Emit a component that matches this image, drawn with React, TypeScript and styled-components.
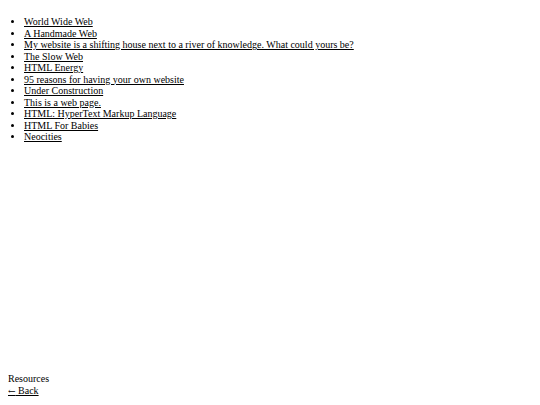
import { createGlobalStyle, styled } from 'styled-components';

const links = [
  'World Wide Web',
  'A Handmade Web',
  'My website is a shifting house next to a river of knowledge. What could yours be?',
  'The Slow Web',
  'HTML Energy',
  '95 reasons for having your own website',
  'Under Construction',
  'This is a web page.',
  'HTML: HyperText Markup Language',
  'HTML For Babies',
  'Neocities',
];

const GlobalStyle = createGlobalStyle`
  html, body {
    margin: 0;
    padding: 0;
    background: #fff;
  }
  body {
    margin: 8px;
    font-family: "Liberation Serif", "Times New Roman", serif;
    font-size: 10px;
    color: #000;
  }
`;

const Page = styled.div`
  display: flex;
  flex-direction: column;
  justify-content: space-between;
  min-height: calc(100vh - 16px);
`;

const LinkList = styled.ul`
  margin: 8px 0;
  padding-left: 16px;
  list-style: disc;
`;

const Item = styled.li`
  line-height: 11.5px;
`;

const Link = styled.a`
  color: #000;
  text-decoration: underline;
`;

const Footer = styled.footer`
  display: flex;
  flex-direction: column;
  line-height: 11.5px;
`;

const Arrow = styled.span`
  font-family: "DejaVu Serif", serif;
  font-size: 9px;
`;

const App = () => {
  return (
    <>
      <GlobalStyle />
      <Page>
        <LinkList>
          {links.map((label) => (
            <Item key={label}>
              <Link href="#">{label}</Link>
            </Item>
          ))}
        </LinkList>
        <Footer>
          <span>Resources</span>
          <span>
            <Link href="#">
              <Arrow>←</Arrow> Back
            </Link>
          </span>
        </Footer>
      </Page>
    </>
  );
};

export default App;
